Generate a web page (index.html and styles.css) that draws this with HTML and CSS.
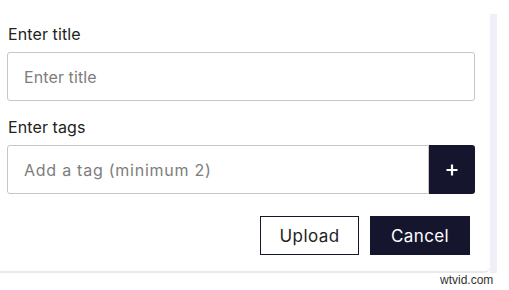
FILE: index.html
```html
<!DOCTYPE html>
<html>
<head>
<meta charset="utf-8">
<link rel="stylesheet" href="styles.css">
</head>
<body>
<div class="stage">
  <div class="card">
    <label class="label">Enter title</label>
    <div class="field"><span class="placeholder">Enter title</span></div>
    <label class="label label-tags">Enter tags</label>
    <div class="tag-row">
      <div class="field tag-field"><span class="placeholder placeholder-wide">Add a tag (minimum 2)</span></div>
      <button class="add-btn" aria-label="Add tag">
        <svg width="14" height="14" viewBox="0 0 14 14"><path d="M7 1.5v11M1.5 7h11" stroke="#fff" stroke-width="2.2" stroke-linecap="butt"/></svg>
      </button>
    </div>
    <div class="actions">
      <button class="btn btn-outline">Upload</button>
      <button class="btn btn-dark">Cancel</button>
    </div>
  </div>
  <div class="strip"></div>
</div>
<div class="watermark">wtvid.com</div>
</body>
</html>
```
FILE: styles.css
```css
* { box-sizing: border-box; }
body {
  margin: 0;
  background: #fff;
  font-family: "Inter", "Noto Sans", sans-serif;
  width: 509px;
  height: 290px;
  overflow: hidden;
}
.stage {
  display: flex;
  align-items: flex-start;
}
.card {
  width: 490px;
  background: #fff;
  padding: 23px 15px 16px 7px;
  border-bottom: 2px solid #e8e9f0;
  border-bottom-right-radius: 6px;
  display: flex;
  flex-direction: column;
}
.strip {
  width: 7px;
  height: 259px;
  margin-top: 14px;
  background: #eff0f7;
}
.label {
  display: block;
  font-size: 16px;
  line-height: 22px;
  letter-spacing: 0.1px;
  color: #222;
  padding-left: 1px;
  margin-bottom: 7px;
}
.label-tags {
  margin-top: 15px;
}
.field {
  height: 49px;
  border: 1px solid #c6c6c6;
  border-radius: 3px;
  display: flex;
  align-items: center;
  padding-left: 16px;
}
.placeholder {
  font-size: 16px;
  letter-spacing: 0.1px;
  color: #7d7d7d;
}
.placeholder-wide {
  letter-spacing: 0.75px;
}
.tag-row {
  display: flex;
}
.tag-field {
  flex: 1;
  border-top-right-radius: 0;
  border-bottom-right-radius: 0;
}
.add-btn {
  width: 46px;
  height: 49px;
  border: none;
  background: #15162e;
  border-radius: 0 3px 3px 0;
  display: flex;
  align-items: center;
  justify-content: center;
  padding: 0;
}
.actions {
  display: flex;
  justify-content: flex-end;
  gap: 11px;
  margin-top: 22px;
  padding-right: 5px;
}
.btn {
  font-family: inherit;
  font-size: 17px;
  letter-spacing: 0.4px;
  height: 39px;
  width: 100px;
  border-radius: 0;
  padding: 0;
}
.btn-outline {
  width: 99px;
  background: #fff;
  color: #222;
  border: 1px solid #15162e;
}
.btn-dark {
  background: #15162e;
  color: #fff;
  border: none;
}
.watermark {
  position: absolute;
  left: 440px;
  top: 273px;
  font-family: "Liberation Sans", sans-serif;
  font-size: 12px;
  color: #333;
}
```
